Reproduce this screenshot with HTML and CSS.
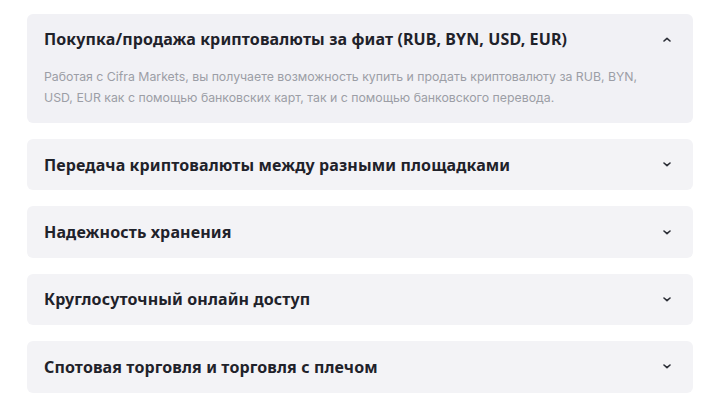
FILE: index.html
```html
<!DOCTYPE html>
<html lang="ru">
<head>
<meta charset="utf-8">
<link rel="stylesheet" href="styles.css">
</head>
<body>
<div class="faq">
  <div class="item open">
    <div class="head">
      <span class="title">Покупка/продажа криптовалюты за фиат (RUB, BYN, USD, EUR)</span>
      <svg class="chev" width="8" height="5" viewBox="0 0 8 5"><path d="M1 4 L4 1.3 L7 4" fill="none" stroke="#2a2d35" stroke-width="1.6" stroke-linecap="round" stroke-linejoin="round"/></svg>
    </div>
    <p class="body">Работая с Cifra Markets, вы получаете возможность купить и продать криптовалюту за RUB, BYN, USD, EUR как с помощью банковских карт, так и с помощью банковского перевода.</p>
  </div>
  <div class="item">
    <div class="head">
      <span class="title">Передача криптовалюты между разными площадками</span>
      <svg class="chev" width="8" height="5" viewBox="0 0 8 5"><path d="M1 1 L4 3.7 L7 1" fill="none" stroke="#2a2d35" stroke-width="1.6" stroke-linecap="round" stroke-linejoin="round"/></svg>
    </div>
  </div>
  <div class="item">
    <div class="head">
      <span class="title">Надежность хранения</span>
      <svg class="chev" width="8" height="5" viewBox="0 0 8 5"><path d="M1 1 L4 3.7 L7 1" fill="none" stroke="#2a2d35" stroke-width="1.6" stroke-linecap="round" stroke-linejoin="round"/></svg>
    </div>
  </div>
  <div class="item">
    <div class="head">
      <span class="title">Круглосуточный онлайн доступ</span>
      <svg class="chev" width="8" height="5" viewBox="0 0 8 5"><path d="M1 1 L4 3.7 L7 1" fill="none" stroke="#2a2d35" stroke-width="1.6" stroke-linecap="round" stroke-linejoin="round"/></svg>
    </div>
  </div>
  <div class="item">
    <div class="head">
      <span class="title">Спотовая торговля и торговля с плечом</span>
      <svg class="chev" width="8" height="5" viewBox="0 0 8 5"><path d="M1 1 L4 3.7 L7 1" fill="none" stroke="#2a2d35" stroke-width="1.6" stroke-linecap="round" stroke-linejoin="round"/></svg>
    </div>
  </div>
</div>
</body>
</html>
```
FILE: styles.css
```css
* { box-sizing: border-box; }
body {
  margin: 0;
  background: #ffffff;
  font-family: "Noto Sans", sans-serif;
}
.faq {
  padding: 14px 27px 0 27px;
  display: flex;
  flex-direction: column;
  gap: 16px;
}
.item {
  background: #f3f3f6;
  border-radius: 6px;
}
.item.open {
  background: #f1f1f5;
}
.head {
  height: 51.4px;
  display: flex;
  align-items: center;
  justify-content: space-between;
  padding: 0 22px 0 17px;
}
.open .head {
  height: 50px;
}
.title {
  font-weight: 700;
  font-size: 16px;
  color: #1f222a;
  letter-spacing: 0.12px;
}
.chev { display: block; }
.body {
  margin: 0;
  padding: 2px 40px 15px 17px;
  font-family: Inter, sans-serif;
  font-size: 12.3px;
  line-height: 21px;
  color: #9c9ea6;
}
```
